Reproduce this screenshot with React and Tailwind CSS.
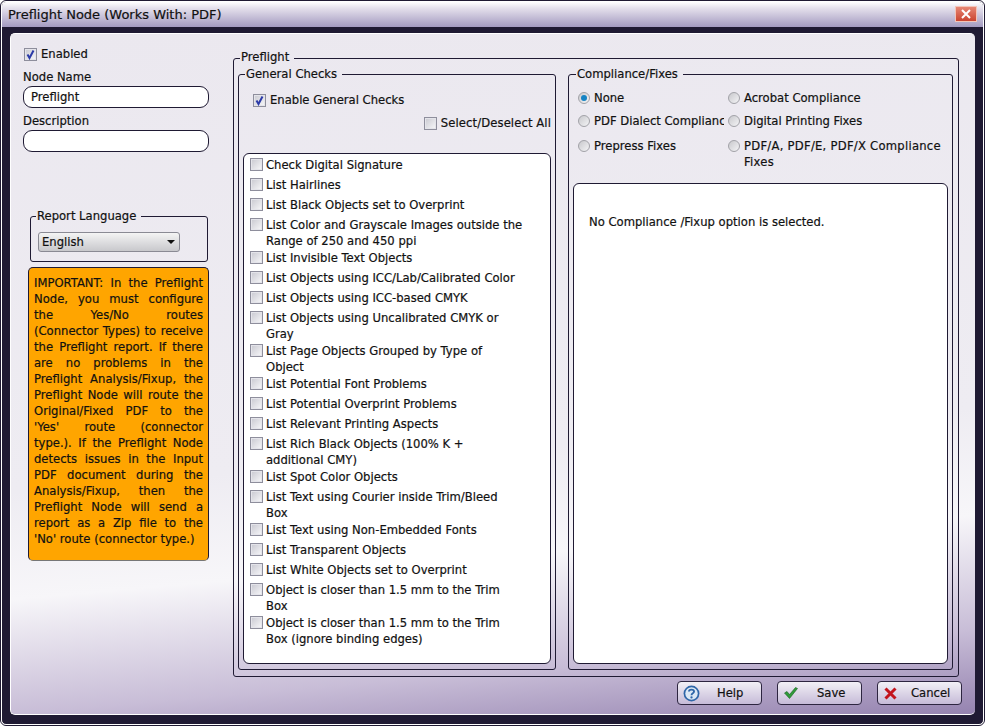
const generalChecks = [
  'Check Digital Signature',
  'List Hairlines',
  'List Black Objects set to Overprint',
  'List Color and Grayscale Images outside the\nRange of 250 and 450 ppi',
  'List Invisible Text Objects',
  'List Objects using ICC/Lab/Calibrated Color',
  'List Objects using ICC-based CMYK',
  'List Objects using Uncalibrated CMYK or\nGray',
  'List Page Objects Grouped by Type of\nObject',
  'List Potential Font Problems',
  'List Potential Overprint Problems',
  'List Relevant Printing Aspects',
  'List Rich Black Objects (100% K +\nadditional CMY)',
  'List Spot Color Objects',
  'List Text using Courier inside Trim/Bleed\nBox',
  'List Text using Non-Embedded Fonts',
  'List Transparent Objects',
  'List White Objects set to Overprint',
  'Object is closer than 1.5 mm to the Trim\nBox',
  'Object is closer than 1.5 mm to the Trim\nBox (ignore binding edges)',
];

const importantLines = [
  'IMPORTANT: In the Preflight',
  'Node, you must configure',
  'the Yes/No routes',
  '(Connector Types) to receive',
  'the Preflight report. If there',
  'are no problems in the',
  'Preflight Analysis/Fixup, the',
  'Preflight Node will route the',
  'Original/Fixed PDF to the',
  "'Yes' route (connector",
  'type.). If the Preflight Node',
  'detects issues in the Input',
  'PDF document during the',
  'Analysis/Fixup, then the',
  'Preflight Node will send a',
  'report as a Zip file to the',
];

const Check = ({ checked }) => (
  <span className="flex h-[13px] w-[13px] shrink-0 items-center justify-center border border-[#8e8e9c] bg-[linear-gradient(135deg,#c8c8d0,#f8f8fa)] shadow-[inset_0_0_0_1px_#e4e4ea]">
    {checked && (
      <svg viewBox="0 0 11 11" className="h-[11px] w-[11px]">
        <path d="M2.5 5.5 L4.5 9 L8.5 1.5" fill="none" stroke="#2b3aa8" strokeWidth="2" />
      </svg>
    )}
  </span>
);

const Radio = ({ checked }) => (
  <span className="flex h-3 w-3 shrink-0 items-center justify-center rounded-full border border-[#a2a2a8] bg-[linear-gradient(135deg,#c8c8cc,#f4f4f6)]">
    {checked && <span className="h-[6px] w-[6px] rounded-full bg-[#1583c4]" />}
  </span>
);

const Group = ({ title, className, legendClass = 'ml-[2px]', children }) => (
  <fieldset className={`rounded-[3px] border border-[#1f1a33] ${className}`}>
    <legend className={`px-px pr-[5px] leading-[13px] ${legendClass}`}>{title}</legend>
    {children}
  </fieldset>
);

const FooterButton = ({ label, icon, className, textClass }) => (
  <button className={`flex h-6 w-[85px] items-center rounded-[4px] border border-[#2d2540] bg-[linear-gradient(#f2f0f6,#c6bbd8)] ${className}`}>
    {icon}
    <span className={textClass}>{label}</span>
  </button>
);

const HelpIcon = () => (
  <svg viewBox="0 0 18 18" className="h-[17px] w-[17px]">
    <circle cx="9" cy="9" r="8.4" fill="#2f66a8" />
    <circle cx="9" cy="9" r="6.6" fill="#dce8f5" />
    <path d="M6.3 7 C6.3 4.2 11.7 4.2 11.7 7 C11.7 8.9 9 8.6 9 10.8" fill="none" stroke="#2f66a8" strokeWidth="2" />
    <circle cx="9" cy="13.2" r="1.2" fill="#2f66a8" />
  </svg>
);

const SaveIcon = () => (
  <svg viewBox="0 0 14 12" className="h-3 w-[14px]">
    <path d="M0.5 6 L3 4.5 L5.5 7.5 L11.5 0.5 L13.5 1.5 L5.5 11.5 Z" fill="#2f9a3a" stroke="#17621f" strokeWidth="0.6" />
  </svg>
);

const CancelIcon = () => (
  <svg viewBox="0 0 13 13" className="h-[13px] w-[13px]">
    <path d="M1.5 1.5 L11.5 11.5 M11.5 1.5 L1.5 11.5" stroke="#c3141c" strokeWidth="3" />
  </svg>
);

const App = () => {
  return (
    <div className="h-[726px] w-[985px] overflow-hidden rounded-[6px] border border-[#1f1a33] font-['DejaVu_Sans',sans-serif] text-[11.6px] leading-4 text-[#111] [-webkit-text-stroke:0.2px]">
      <div className="h-full rounded-[5px] border border-white bg-[#1f1a33]">
        <div className="flex h-[25px] items-center justify-between rounded-t-[4px] bg-[linear-gradient(#ffffff_0%,#e4e0ec_25%,#a39ac0_100%)] pl-[6px] pr-[6px]">
          <span className="text-[13px]">Preflight Node (Works With: PDF)</span>
          <span className="mb-[2px] flex h-4 w-[22px] items-center justify-center bg-[linear-gradient(#e88a78,#c9402c)] shadow-[inset_0_0_0_1px_#f3c4b8]">
            <svg viewBox="0 0 10 10" className="h-[10px] w-[10px]">
              <path d="M1 1 L9 9 M9 1 L1 9" stroke="#fff" strokeWidth="2" />
            </svg>
          </span>
        </div>

        <div className="mx-[8px] mt-[6px] flex h-[682px] flex-col rounded-[5px] border-t border-l border-b border-white bg-[linear-gradient(175deg,#ebe8ef_0%,#eeecf2_60%,#f7f6f9_74%,#c8bdd7_89%,#9583b0_100%)] pl-3 pr-[13px]">
          <div className="flex flex-1">
            <aside className="w-[186px] shrink-0 pt-3">
              <label className="ml-px flex items-center gap-1">
                <Check checked />
                Enabled
              </label>
              <p className="mt-[7px]">Node Name</p>
              <div className="mt-px flex h-[22px] items-center rounded-[9px] border border-[#1f1a33] bg-white pl-[7px]">Preflight</div>
              <p className="mt-[5px]">Description</p>
              <div className="mt-px h-[22px] rounded-[9px] border border-[#1f1a33] bg-white" />
              <Group title="Report Language" legendClass="-ml-[2px]" className="ml-[7px] mt-[58px] h-[52px] w-[178px] px-[7px]">
                <div className="mt-[9px] flex h-5 w-[142px] items-center justify-between rounded-[3px] border border-[#8a8a94] bg-[linear-gradient(#f4f4f4,#c8c8cc)] pl-[3px] pr-1">
                  English
                  <span className="h-0 w-0 border-x-[4px] border-t-[4px] border-x-transparent border-t-[#111]" />
                </div>
              </Group>
              <div className="ml-[5px] mt-[5px] h-[294px] w-[181px] rounded-[5px] border border-[#1f1a33] border-b-[#777] bg-[#ffa500] px-[5px] py-[7px]">
                {importantLines.map((line) => (
                  <p key={line} className="whitespace-nowrap [text-align-last:justify]">{line}</p>
                ))}
                <p className="whitespace-nowrap">'No' route (connector type.)</p>
              </div>
            </aside>

            <Group title="Preflight" legendClass="ml-[2px] -translate-y-px" className="ml-6 mt-[18px] flex h-[625px] w-[726px] gap-3 px-1 pb-[5px] pt-[3px]">
              <Group title="General Checks" className="flex h-[602px] w-[318px] flex-col px-1 pb-[5px]">
                <label className="ml-[10px] mt-[11px] flex items-center gap-1">
                  <Check checked />
                  Enable General Checks
                </label>
                <label className="mt-[7px] flex items-center justify-end gap-1 tracking-[0.1px]">
                  <Check />
                  Select/Deselect All
                </label>
                <div className="mt-[22px] flex-1 rounded-[6px] border border-[#1f1a33] bg-white pb-[3px] pl-[6px] pt-[3px]">
                  {generalChecks.map((item) => (
                    <label key={item} className={`flex gap-[3px] ${item.includes('\n') ? 'pb-px' : 'pb-1'}`}>
                      <span className="pt-px">
                        <Check />
                      </span>
                      <span className="whitespace-pre-line">{item}</span>
                    </label>
                  ))}
                </div>
              </Group>

              <Group title="Compliance/Fixes" legendClass="ml-[3px]" className="flex h-[602px] w-[385px] flex-col px-1 pb-[5px]">
                <div className="ml-[5px] mt-[9px] grid grid-cols-[150px_1fr] gap-y-[7px]">
                  <label className="flex items-center gap-1"><Radio checked />None</label>
                  <label className="flex items-center gap-1"><Radio />Acrobat Compliance</label>
                  <label className="flex items-center gap-1 whitespace-nowrap"><Radio /><span className="w-[130px] overflow-hidden">PDF Dialect Compliance</span></label>
                  <label className="flex items-center gap-1"><Radio />Digital Printing Fixes</label>
                  <label className="flex items-start gap-1 pt-[2px]"><span className="pt-[2px]"><Radio /></span>Prepress Fixes</label>
                  <label className="flex items-start gap-1 pt-[2px] tracking-[0.25px]"><span className="pt-[2px]"><Radio /></span>PDF/A, PDF/E, PDF/X Compliance Fixes</label>
                </div>
                <div className="mt-[13px] flex-1 rounded-[6px] border border-[#1f1a33] bg-white pl-[15px] pt-[30px]">
                  No Compliance /Fixup option is selected.
                </div>
              </Group>
            </Group>
          </div>

          <div className="mb-[9px] flex justify-end gap-[15px]">
            <FooterButton label="Help" icon={<HelpIcon />} className="pl-[5px]" textClass="ml-[17px]" />
            <FooterButton label="Save" icon={<SaveIcon />} className="pl-[6px]" textClass="ml-[19px]" />
            <FooterButton label="Cancel" icon={<CancelIcon />} className="pl-[6px]" textClass="ml-[14px]" />
          </div>
        </div>
      </div>
    </div>
  );
};

export default App;
